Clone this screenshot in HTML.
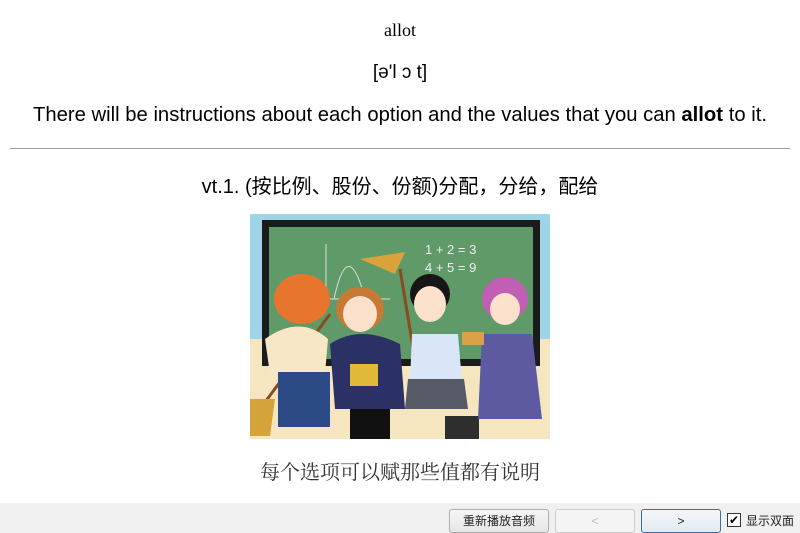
<!DOCTYPE html>
<html><head><meta charset="utf-8"><style>
body{margin:0;width:800px;height:533px;background:#fff;position:relative;overflow:hidden;font-family:"Liberation Sans","Noto Sans CJK SC",sans-serif;color:#000}
.c{position:absolute;left:0;width:800px;text-align:center;white-space:nowrap}
.bar{position:absolute;left:0;top:503px;width:800px;height:30px;background:#f0f0f0}
.btn{position:absolute;top:509px;height:22px;border:1px solid #adadad;border-radius:3px;background:linear-gradient(#f6f6f6,#e6e6e6);font-size:12px;text-align:center;line-height:22px;color:#222;font-family:"Liberation Sans","Noto Sans CJK SC",sans-serif}
</style></head><body>
<div class="c" style="top:20px;font:18px 'Liberation Serif',serif">allot</div>
<div class="c" style="top:62px;font-size:19px">[ə'l ɔ t]</div>
<div class="c" style="top:104px;font-size:20.25px">There will be instructions about each option and the values that you can <b>allot</b> to it.</div>
<div style="position:absolute;left:10px;top:148px;width:780px;height:1px;background:#a0a0a0"></div>
<div class="c" style="top:170px;font-size:20px">vt.1. (按比例、股份、份额)分配，分给，配给</div>
<svg style="position:absolute;left:250px;top:214px" width="300" height="225" viewBox="0 0 300 225">
<rect width="300" height="225" fill="#9fd3e6"/>
<rect y="125" width="300" height="100" fill="#f6e6c0"/>
<rect x="12" y="6" width="278" height="146" fill="#1b1b1b"/>
<rect x="19" y="13" width="264" height="132" fill="#5f9a68"/>
<text x="175" y="40" fill="#eee" font-size="13" font-family="Liberation Sans">1 + 2 = 3</text>
<text x="175" y="58" fill="#eee" font-size="13" font-family="Liberation Sans">4 + 5 = 9</text>
<path d="M76 30V85H140M84 85Q98 20 115 85" stroke="#ddd" fill="none"/>
<path d="M110 45L155 38 145 60Z" fill="#d9a23a"/>
<line x1="150" y1="55" x2="172" y2="188" stroke="#8a4b22" stroke-width="3"/>
<line x1="80" y1="100" x2="10" y2="195" stroke="#8a4b22" stroke-width="3"/>
<path d="M0 185L25 185 20 222 0 222Z" fill="#d4a43a"/>
<ellipse cx="52" cy="85" rx="28" ry="25" fill="#e8752d"/>
<path d="M15 125Q50 100 78 125L75 160H20Z" fill="#f8e7c6"/>
<rect x="28" y="158" width="52" height="55" fill="#2c4a86"/>
<ellipse cx="110" cy="95" rx="24" ry="22" fill="#c77a35"/>
<ellipse cx="110" cy="100" rx="17" ry="18" fill="#fbe0cc"/>
<path d="M80 130Q110 110 150 130L155 195H85Z" fill="#2b3164"/>
<rect x="100" y="150" width="28" height="22" fill="#e0b83a"/>
<rect x="100" y="195" width="40" height="30" fill="#111"/>
<ellipse cx="180" cy="80" rx="20" ry="20" fill="#161616"/>
<ellipse cx="180" cy="90" rx="16" ry="18" fill="#fbe0cc"/>
<path d="M162 120H208L212 168H160Z" fill="#d8e6f8"/>
<path d="M158 165H214L218 195H155Z" fill="#555a66"/>
<rect x="195" y="202" width="34" height="23" fill="#2e2e2e"/>
<ellipse cx="255" cy="85" rx="23" ry="22" fill="#c05fb3"/>
<ellipse cx="255" cy="95" rx="15" ry="16" fill="#fbe0cc"/>
<path d="M232 120H282L292 205H228Z" fill="#5d5aa2"/>
<rect x="212" y="118" width="22" height="13" fill="#d9a24a"/>
</svg>
<div class="c" style="top:456px;font:20px 'Noto Serif CJK SC',serif;color:#333">每个选项可以赋那些值都有说明</div>
<div class="bar"></div>
<div class="btn" style="left:449px;width:98px">重新播放音频</div>
<div class="btn" style="left:555px;width:78px;color:#bbb;background:#f4f4f4;border-color:#ccc">&lt;</div>
<div class="btn" style="left:641px;width:78px;border-color:#3a6ea5;background:linear-gradient(#f4f7fb,#e2eaf3)">&gt;</div>
<div style="position:absolute;left:727px;top:513px;width:12px;height:12px;border:1px solid #333;background:#fff;font-size:12px;line-height:12px;text-align:center">✔</div>
<div style="position:absolute;left:746px;top:512px;font:12px 'Noto Sans CJK SC',sans-serif;color:#222">显示双面</div>
</body></html>
